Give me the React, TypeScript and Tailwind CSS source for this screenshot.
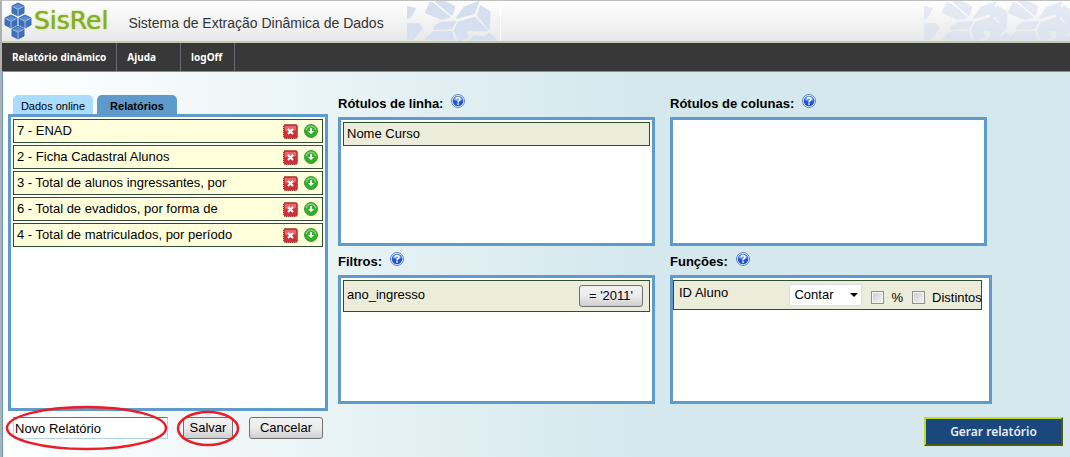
import type { ReactNode } from "react";
import { useState } from "react";

const reports = [
  { id: 7, name: "ENAD" },
  { id: 2, name: "Ficha Cadastral Alunos" },
  { id: 3, name: "Total de alunos ingressantes, por" },
  { id: 6, name: "Total de evadidos, por forma de" },
  { id: 4, name: "Total de matriculados, por período" },
];

const menu = [
  { label: "Relatório dinâmico", className: "px-[10px]" },
  { label: "Ajuda", className: "pl-[10px] pr-6" },
  { label: "logOff", className: "pl-[10px] pr-3" },
];

const buttonClass =
  "h-[22px] rounded-[3px] border border-[#707070] bg-linear-to-b from-[#f2f2f2] via-[#ebebeb] via-50% to-[#cfcfcf] text-center leading-[18px]";

const checkboxClass =
  "size-[13px] shrink-0 appearance-none border border-[#8e8f8f] bg-linear-to-br from-[#c8ccd0] to-[#f6f6f6] shadow-[inset_0_0_0_1px_#f4f4f4] checked:bg-[#5e9bcb]";

function LogoCube({ x, y }: { x: number; y: number }) {
  return (
    <g transform={`translate(${x} ${y})`} strokeLinejoin="round">
      <path d="M6 0 12 3V10L6 13 0 10V3Z" fill="#3f6fb8" stroke="#3f6fb8" />
      <path d="M6 1 11 3.500 6 6 1 3.500Z" fill="#5f8fd2" />
      <path d="M0.500 3.500 6 6.300 11.500 3.500M6 6.300V13" fill="none" stroke="#a9c6ee" strokeWidth="0.9" />
    </g>
  );
}

function Logo() {
  return (
    <svg
      width="24"
      height="37"
      viewBox="0 0 24 37"
      className="overflow-visible"
      aria-hidden="true"
    >
      <LogoCube x={6} y={0} />
      <LogoCube x={-1} y={12} />
      <LogoCube x={13} y={12} />
      <LogoCube x={6} y={23} />
    </svg>
  );
}

// Loose cube faces used as a watermark in the header
function CubePattern() {
  return (
    <g
      transform="scale(0.3333) translate(39 -3)"
      fill="#d6dfef"
      stroke="#d6dfef"
      strokeWidth="4"
      strokeLinejoin="round"
    >
      <path d="M-37 20-14 26-30 53-37 56Z" />
      <path d="M46 4H74L104 20 96 46Z" />
      <path d="M30 8 38 9 90 52 62 57 16 38Z" />
      <path d="M132 22 176 5 163 40 110 54Z" />
      <path d="M182 18 210 36 207 88 173 47Z" />
      <path d="M-37 72-2 72 6 85-20 118H-37Z" />
      <path d="M44 78 64 68 106 65 94 86 42 88Z" />
      <path d="M16 118 40 96 94 95 102 120Z" />
      <path d="M114 68 164 52 202 92 138 92 144 112 116 122 104 92Z" />
      <path d="M208 100 228 120H150L164 108 194 112Z" />
    </g>
  );
}

function HelpIcon() {
  return (
    <svg width="14" height="14" viewBox="0 0 14 14" aria-hidden="true">
      <circle cx="7" cy="7" r="6.500" fill="#eef4ff" stroke="#5d82c4" />
      <circle cx="7" cy="7" r="5.300" fill="#2457cf" />
      <path d="M2.400 6a4.700 4.700 0 0 1 9.200 0Q7 8 2.400 6Z" fill="#6f9bf2" />
      <path
        d="M5 5.400Q5.200 3.600 7 3.600 9 3.700 9 5.300 9 6.300 7.700 7 7 7.400 7 8.400"
        fill="none"
        stroke="#fff"
        strokeWidth="1.500"
      />
      <rect x="6.200" y="9.300" width="1.600" height="1.500" fill="#fff" />
    </svg>
  );
}

function DeleteIcon() {
  return (
    <svg width="15" height="15" viewBox="0 0 15 15" aria-hidden="true">
      <rect x="0.500" y="0.500" width="14" height="14" rx="2" fill="#cf3036" />
      <rect
        x="0.500"
        y="0.500"
        width="14"
        height="14"
        rx="2"
        fill="none"
        stroke="#8f2a2a"
        strokeDasharray="1 1"
      />
      <path d="M2 2H13V6Q8 8 2 7Z" fill="#e5686b" />
      <path d="M5 5 10 10M10 5 5 10" stroke="#fff" strokeWidth="2" />
    </svg>
  );
}

function LoadIcon() {
  return (
    <svg width="14" height="14" viewBox="0 0 14 14" aria-hidden="true">
      <circle cx="7" cy="7" r="6.500" fill="#2fae27" stroke="#3d9a3d" />
      <path d="M1.500 6A5.600 5.600 0 0 1 12.500 6Q7 8.500 1.500 6Z" fill="#7ed66f" />
      <circle cx="7" cy="7" r="4" fill="#36b02c" />
      <path d="M6 4H8V7H10L7 10 4 7H6Z" fill="#fff" />
    </svg>
  );
}

type PanelProps = { title: string; className?: string; children?: ReactNode };

function Panel({ title, className = "", children }: PanelProps) {
  return (
    <section className={className}>
      <div className="flex h-[23px] gap-2">
        <h2 className="pt-[2px] font-bold leading-4">{title}</h2>
        <button type="button" aria-label={`Ajuda: ${title}`} className="h-[14px]">
          <HelpIcon />
        </button>
      </div>
      <div className="h-[129px] border-3 border-[#5e9bcb] bg-white">{children}</div>
    </section>
  );
}

function Highlight({ className }: { className: string }) {
  return (
    <svg
      className={`pointer-events-none absolute overflow-visible ${className}`}
      viewBox="0 0 100 100"
      preserveAspectRatio="none"
      aria-hidden="true"
    >
      <ellipse
        cx="50"
        cy="50"
        rx="50"
        ry="50"
        fill="none"
        stroke="#ed1c24"
        strokeWidth="2.500"
        vectorEffect="non-scaling-stroke"
      />
    </svg>
  );
}

export default function App() {
  const [name, setName] = useState("Novo Relatório");
  const [percent, setPercent] = useState(false);
  const [distinct, setDistinct] = useState(false);

  return (
    <div className="flex min-h-screen flex-col border-t border-l-2 border-t-[#c0c0c0] border-l-[#b0b0b0] font-['Liberation_Sans',Arial,sans-serif] text-[13px] text-black">
      <header className="relative flex h-[42px] items-center border-b-2 border-[#c3c8b4] bg-linear-to-b from-white to-[#e8e8e8] pl-1">
        <svg
          className="absolute top-0 left-[405px] border-r border-white"
          width="94"
          height="40"
          aria-hidden="true"
        >
          <CubePattern />
        </svg>
        <svg
          className="absolute top-0 right-0 opacity-60"
          width="146"
          height="40"
          aria-hidden="true"
        >
          <CubePattern />
          <g transform="translate(66 0)">
            <CubePattern />
          </g>
          <g transform="translate(132 0)">
            <CubePattern />
          </g>
        </svg>
        <Logo />
        <span className="ml-1 font-['DejaVu_Sans',Verdana,sans-serif] text-[25px] leading-10 text-[#86ad2c] [text-shadow:0_0_1px_#86ad2c,0_0_3px_#d4ea94]">
          SisRel
        </span>
        <h1 className="ml-5 pt-1 text-[14px] text-[#333]">
          Sistema de Extração Dinâmica de Dados
        </h1>
      </header>

      <nav className="flex h-[29px] border-b border-[#5e9bcb] bg-[#383838] font-['Noto_Sans',sans-serif] text-[10px] font-bold text-white">
        {menu.map((item) => (
          <a
            key={item.label}
            href="#"
            className={`flex items-center border-r border-[#6b6b78] ${item.className}`}
          >
            {item.label}
          </a>
        ))}
      </nav>

      <main className="flex-1 border-l border-[#5e9bcb] bg-linear-to-r from-white via-[#d4e8ed] via-60% to-[#d4e8ed] pb-2">
        <div className="grid grid-cols-[320fr_322fr_322fr] gap-[10px] pt-[22px] pr-[78px] pl-[5px]">
          <section>
            <div className="flex h-5 gap-1 pt-px pl-[5px] text-[11px]">
              <button type="button" className="w-20 rounded-t-[5px] bg-[#aadcff] pt-[3px]">
                Dados online
              </button>
              <button
                type="button"
                className="w-20 rounded-t-[5px] bg-[#5e9bcb] pt-[3px] font-bold"
              >
                Relatórios
              </button>
            </div>
            <ul className="flex h-[297px] flex-col gap-[2px] border-3 border-[#5e9bcb] bg-white p-[2px]">
              {reports.map((report) => (
                <li
                  key={report.id}
                  className="flex h-6 items-center gap-[6px] border border-[#2f4f2f] bg-[#ffffdc] pr-1 pl-[3px]"
                >
                  <span className="flex-1">
                    {report.id} - {report.name}
                  </span>
                  <button type="button" aria-label={`Excluir ${report.name}`}>
                    <DeleteIcon />
                  </button>
                  <button type="button" aria-label={`Carregar ${report.name}`}>
                    <LoadIcon />
                  </button>
                </li>
              ))}
            </ul>
          </section>

          <div className="flex flex-col gap-[6px] pr-[5px]">
            <Panel title="Rótulos de linha:">
              <div className="m-[2px] flex h-6 items-center border border-[#2f4f2f] bg-[#ebecd9] px-[3px]">
                Nome Curso
              </div>
            </Panel>
            <Panel title="Filtros:">
              <div className="m-[2px] flex h-8 justify-between border border-[#2f4f2f] bg-[#ebecd9] pt-1 pr-[6px] pl-[3px]">
                <span className="leading-5">ano_ingresso</span>
                <button type="button" className={`w-16 ${buttonClass}`}>
                  = '2011'
                </button>
              </div>
            </Panel>
          </div>

          <div className="flex flex-col gap-[6px]">
            <Panel title="Rótulos de colunas:" className="pr-[5px]" />
            <Panel title="Funções:">
              <div className="mt-[2px] mr-[7px] flex h-[30px] border border-[#2f4f2f] bg-[#ebecd9] pt-[3px] pl-[5px] whitespace-nowrap">
                <label htmlFor="func" className="flex-1 leading-[18px]">
                  ID Aluno
                </label>
                <div className="relative">
                  <select
                    id="func"
                    className="h-[22px] w-[73px] appearance-none rounded-[2px] border border-[#dcdfe6] bg-white pl-1"
                  >
                    <option>Contar</option>
                    <option>Somar</option>
                  </select>
                  <svg
                    className="pointer-events-none absolute top-[9px] right-1"
                    width="8"
                    height="4"
                    aria-hidden="true"
                  >
                    <path d="M0 0H8L4 4Z" />
                  </svg>
                </div>
                <label className="ml-[9px] flex items-center gap-[7px] pt-[2px]">
                  <input
                    type="checkbox"
                    checked={percent}
                    onChange={(e) => setPercent(e.target.checked)}
                    className={checkboxClass}
                  />
                  %
                </label>
                <label className="ml-[9px] flex w-[69px] items-center gap-[7px] pt-[2px]">
                  <input
                    type="checkbox"
                    checked={distinct}
                    onChange={(e) => setDistinct(e.target.checked)}
                    className={checkboxClass}
                  />
                  Distintos
                </label>
              </div>
            </Panel>
          </div>
        </div>

        <form
          onSubmit={(e) => e.preventDefault()}
          className="flex items-start pt-[6px] pr-[7px] pl-[10px]"
        >
          <div className="relative">
            <input
              type="text"
              aria-label="Nome do relatório"
              value={name}
              onChange={(e) => setName(e.target.value)}
              className="block h-[22px] w-[155px] border border-[#b5d3e7] border-t-[#3d7bad] bg-white px-px outline-none"
            />
            <Highlight className="-top-[10px] -left-[6px] h-[42px] w-[159px]" />
          </div>
          <div className="relative ml-[15px]">
            <button type="submit" className={`block w-[50px] ${buttonClass}`}>
              Salvar
            </button>
            <Highlight className="-top-[5px] -left-[5px] h-[33px] w-[60px]" />
          </div>
          <button
            type="button"
            onClick={() => setName("")}
            className={`ml-4 w-[74px] ${buttonClass}`}
          >
            Cancelar
          </button>
          <button
            type="button"
            className="ml-auto h-[29px] w-[139px] border-2 border-t-[#bfdc28] border-r-[#4e5c10] border-b-[#4e5c10] border-l-[#bfdc28] bg-[#1a477c] font-['Noto_Sans',sans-serif] text-[12px] font-semibold text-[#e8eef5]"
          >
            Gerar relatório
          </button>
        </form>
      </main>
    </div>
  );
}
